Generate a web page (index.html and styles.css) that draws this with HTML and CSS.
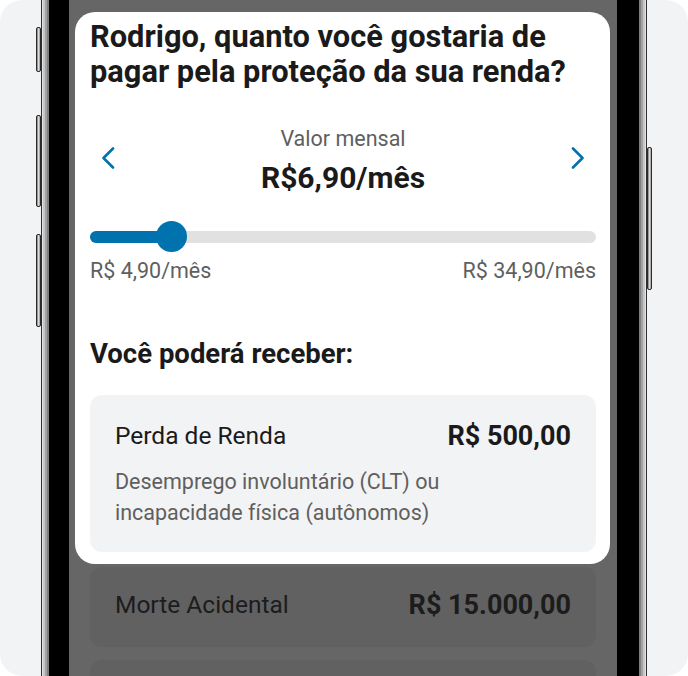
FILE: index.html
```html
<!DOCTYPE html>
<html lang="pt-BR">
<head>
<meta charset="utf-8">
<title>Proteção de renda</title>
<link rel="stylesheet" href="styles.css">
</head>
<body>
<div class="canvas">
  <div class="phone">
    <span class="side-btn btn-mute"></span>
    <span class="side-btn btn-vol-up"></span>
    <span class="side-btn btn-vol-down"></span>
    <span class="side-btn btn-power"></span>
    <div class="bezel">
      <div class="screen">
        <section class="sheet">
          <h1 class="title">Rodrigo, quanto você gostaria de pagar pela proteção da sua renda?</h1>
          <div class="picker">
            <button class="nav" aria-label="Anterior">
              <svg width="14" height="22" viewBox="0 0 14 22"><path d="M12 1.5 L2.5 11 L12 20.5" fill="none" stroke="#0073ae" stroke-width="2.6" stroke-linecap="round" stroke-linejoin="round"/></svg>
            </button>
            <div class="picker-value">
              <span class="picker-label">Valor mensal</span>
              <span class="picker-price">R$6,90/mês</span>
            </div>
            <button class="nav" aria-label="Próximo">
              <svg width="14" height="22" viewBox="0 0 14 22"><path d="M2 1.5 L11.5 11 L2 20.5" fill="none" stroke="#0073ae" stroke-width="2.6" stroke-linecap="round" stroke-linejoin="round"/></svg>
            </button>
          </div>
          <div class="slider">
            <div class="track"><div class="fill" style="width:16.2%"></div></div>
            <div class="thumb"></div>
          </div>
          <div class="range">
            <span>R$ 4,90/mês</span>
            <span>R$ 34,90/mês</span>
          </div>
          <h2 class="subtitle">Você poderá receber:</h2>
          <div class="cover">
            <div class="cover-head">
              <span class="cover-name">Perda de Renda</span>
              <span class="cover-amount">R$ 500,00</span>
            </div>
            <p class="cover-desc">Desemprego involuntário (CLT) ou incapacidade física (autônomos)</p>
          </div>
        </section>
        <div class="list">
          <div class="dim-card">
            <span class="cover-name">Morte Acidental</span>
            <span class="cover-amount">R$ 15.000,00</span>
          </div>
          <div class="dim-card"></div>
        </div>
      </div>
    </div>
  </div>
</div>
</body>
</html>
```
FILE: styles.css
```css
* { box-sizing: border-box; }
html, body { margin: 0; background: #ffffff; }
body { font-family: Roboto, "Noto Sans", Arial, sans-serif; color: #1a1a1a; }

.canvas {
  width: 688px;
  height: 676px;
  background: #f2f3f5;
  border-radius: 22px;
  overflow: hidden;
  display: flex;
  justify-content: center;
}

.phone {
  position: relative;
  flex-shrink: 0;
  width: 606px;
  height: 900px;
  margin-top: -100px;
  border: 1px solid #2e2e2e;
  border-radius: 72px;
  padding: 7px;
  background: #7e7e7e;
  box-shadow: inset 0 0 0 1px #e4e4e4, inset 0 0 0 3px #c6c6c6, inset 0 0 0 5px #a2a2a2;
}

.side-btn {
  position: absolute;
  width: 5px;
  border: 1px solid #2a2a2a;
  border-radius: 2px;
  background: linear-gradient(90deg, #6a6a6a, #e2e2e2 45%, #9a9a9a);
}
.btn-mute { left: -6px; top: 126px; height: 45px; }
.btn-vol-up { left: -6px; top: 214px; height: 92px; }
.btn-vol-down { left: -6px; top: 333px; height: 93px; }
.btn-power { right: -6px; top: 246px; height: 143px; }

.bezel {
  height: 100%;
  background: #000;
  border-radius: 64px;
  padding: 20px 22px 20px 20px;
}

.screen {
  height: 100%;
  background: #666666;
  border-radius: 46px;
  overflow: hidden;
  padding-top: 84px;
}

.sheet {
  background: #ffffff;
  border-radius: 20px;
  margin: 0 7px 0 6px;
  padding: 6.5px 14px 12px 15px;
}

.title {
  margin: 0;
  font-size: 30.8px;
  line-height: 35px;
  font-weight: 700;
  color: #1a1a1a;
}

.picker {
  display: flex;
  align-items: center;
  justify-content: space-between;
  margin-top: 37.5px;
}
.nav {
  width: 36px;
  height: 36px;
  margin-bottom: 5px;
  border: 0;
  padding: 0;
  background: none;
  display: flex;
  align-items: center;
  justify-content: center;
}
.picker-value {
  display: flex;
  flex-direction: column;
  align-items: center;
  gap: 9px;
}
.picker-label {
  font-size: 21.5px;
  line-height: 26px;
  color: #5f5f5f;
}
.picker-price {
  font-size: 30px;
  line-height: 34px;
  font-weight: 700;
  color: #1a1a1a;
}

.slider {
  position: relative;
  height: 32px;
  margin-top: 26px;
  display: flex;
  align-items: center;
}
.track {
  width: 100%;
  height: 12px;
  border-radius: 6px;
  background: #e1e1e1;
}
.fill {
  height: 100%;
  border-radius: 6px;
  background: #0073ae;
}
.thumb {
  position: absolute;
  left: 66px;
  top: 0;
  width: 31px;
  height: 31px;
  border-radius: 50%;
  background: #0073ae;
}

.range {
  display: flex;
  justify-content: space-between;
  margin-top: 5px;
  font-size: 21.5px;
  line-height: 26px;
  color: #5f5f5f;
}

.subtitle {
  margin: 54px 0 0;
  font-size: 27.5px;
  line-height: 32px;
  font-weight: 700;
  color: #1a1a1a;
}

.cover {
  margin-top: 25px;
  background: #f2f3f5;
  border-radius: 12px;
  padding: 26px 25px 24.5px;
}
.cover-head {
  display: flex;
  justify-content: space-between;
  align-items: center;
}
.cover-name {
  font-size: 24.5px;
  line-height: 30px;
}
.cover-amount {
  font-size: 27px;
  line-height: 30px;
  font-weight: 700;
}
.cover-desc {
  margin: 14.5px 0 0;
  max-width: 360px;
  font-size: 21.5px;
  line-height: 31px;
  color: #5f5f5f;
}

.list {
  display: flex;
  flex-direction: column;
  gap: 13px;
  padding: 3px 21px 0;
}
.dim-card {
  height: 80px;
  border-radius: 12px;
  background: #616162;
  padding: 23px 25px 0;
  display: flex;
  align-items: flex-start;
  justify-content: space-between;
  color: #1c1c1c;
}
```
